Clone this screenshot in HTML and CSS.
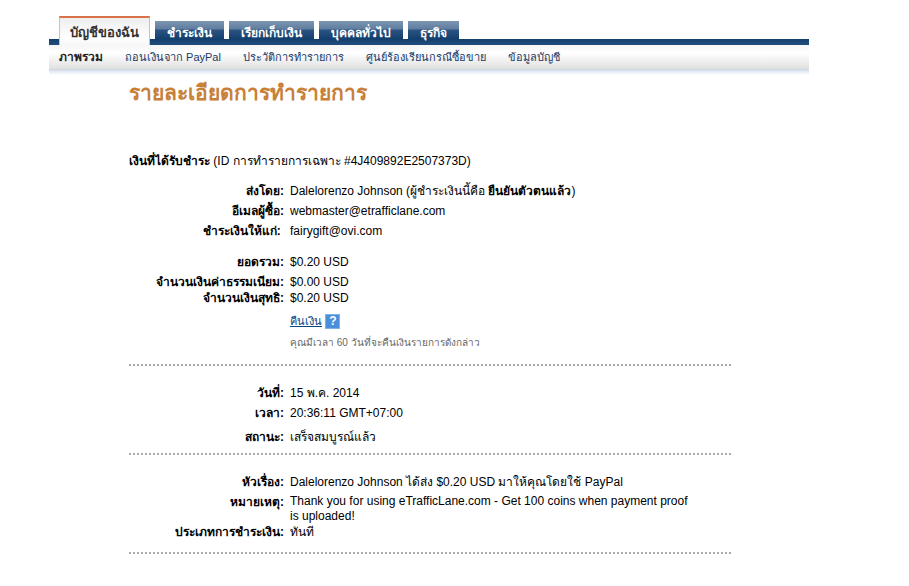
FILE: index.html
```html
<!DOCTYPE html>
<html lang="th">
<head>
  <meta charset="UTF-8" />
  <meta name="viewport" content="width=device-width, initial-scale=1.0"/>
  <title>รายละเอียดการทำรายการ - PayPal</title>
  <link rel="stylesheet" href="styles.css">
</head>
<body>

<div class="page">
  <nav class="tabs">
    <a class="tab active" href="#">บัญชีของฉัน</a>
    <a class="tab" href="#">ชำระเงิน</a>
    <a class="tab" href="#">เรียกเก็บเงิน</a>
    <a class="tab" href="#">บุคคลทั่วไป</a>
    <a class="tab" href="#">ธุรกิจ</a>
  </nav>
  <nav class="subnav">
    <a class="current" href="#">ภาพรวม</a>
    <a href="#">ถอนเงินจาก PayPal</a>
    <a href="#">ประวัติการทำรายการ</a>
    <a href="#">ศูนย์ร้องเรียนกรณีซื้อขาย</a>
    <a href="#">ข้อมูลบัญชี</a>
  </nav>

  <main class="content">
    <h1>รายละเอียดการทำรายการ</h1>
    <p class="summary"><strong>เงินที่ได้รับชำระ</strong> (ID การทำรายการเฉพาะ #4J409892E2507373D)</p>

    <section class="section">
      <dl class="details">
        <dt>ส่งโดย:</dt>
        <dd>Dalelorenzo Johnson (ผู้ชำระเงินนี้คือ <strong>ยืนยันตัวตนแล้ว</strong>)</dd>
        <dt>อีเมลผู้ซื้อ:</dt>
        <dd>webmaster@etrafficlane.com</dd>
        <dt>ชำระเงินให้แก่:&nbsp;</dt>
        <dd>fairygift@ovi.com</dd>
      </dl>
      <dl class="details">
        <dt>ยอดรวม:</dt>
        <dd>$0.20 USD</dd>
        <dt class="tight">จำนวนเงินค่าธรรมเนียม:</dt>
        <dd class="tight">$0.00 USD</dd>
        <dt>จำนวนเงินสุทธิ:</dt>
        <dd>$0.20 USD</dd>
      </dl>
      <div class="refund">
        <p><a class="refund-link" href="#">คืนเงิน</a> <button class="help" type="button" aria-label="ช่วยเหลือ">?</button></p>
        <p class="note">คุณมีเวลา 60 วันที่จะคืนเงินรายการดังกล่าว</p>
      </div>
    </section>

    <section class="section">
      <dl class="details">
        <dt>วันที่:</dt>
        <dd>15 พ.ค. 2014</dd>
        <dt class="loose">เวลา:</dt>
        <dd class="loose">20:36:11 GMT+07:00</dd>
        <dt class="tight">สถานะ:</dt>
        <dd class="tight">เสร็จสมบูรณ์แล้ว</dd>
      </dl>
    </section>

    <section class="section">
      <dl class="details">
        <dt>หัวเรื่อง:</dt>
        <dd>Dalelorenzo Johnson ได้ส่ง $0.20 USD มาให้คุณโดยใช้ PayPal</dd>
        <dt class="tight">หมายเหตุ:</dt>
        <dd class="tight message">Thank you for using eTrafficLane.com - Get 100 coins when payment proof is uploaded!</dd>
        <dt>ประเภทการชำระเงิน:</dt>
        <dd>ทันที</dd>
      </dl>
    </section>
  </main>
</div>

</body>
</html>
```
FILE: styles.css
```css
* { box-sizing: border-box; margin: 0; padding: 0; }
body {
  background: #fff;
  color: #000;
  font-family: "Liberation Sans", Arial, sans-serif;
  font-size: 12px;
  line-height: 16px;
}
a {
  color: #1a3a66;
  text-decoration: none;
}
.page {
  max-width: 809px;
  padding: 16px 0 16px 49px;
}

/* top tabs */
.tabs {
  display: flex;
  align-items: flex-end;
  gap: 5px;
  height: 29px;
  padding-left: 10px;
  background: linear-gradient(#133f6e, #234f80) bottom / 100% 6px no-repeat;
}
.tab {
  height: 24px;
  padding: 0 12px;
  color: #fff;
  font-weight: bold;
  line-height: 24px;
  white-space: nowrap;
  background: linear-gradient(#7e96b1, #5f7d9f 8px, #2c5482 9px, #133f6e 18px, #234f80);
}
.tab.active {
  height: 29px;
  padding: 0 10px;
  color: #333;
  font-size: 13px;
  line-height: 29px;
  background: linear-gradient(#eee, #fff 20px, #f6f6f6);
  border: 1px solid #c4c4c4;
  border-top: 2px solid #d9714a;
  border-bottom: none;
}
.subnav {
  display: flex;
  gap: 22px;
  height: 30px;
  padding-left: 10px;
  font-size: 11px;
  line-height: 24px;
  white-space: nowrap;
  background: linear-gradient(#f6f6f6, #fff 8px, #e0e0e0 24px, #c9d3e0 24px, #dfe7f1 26px, #fff 30px);
}
.subnav .current {
  color: #222;
  font-size: 12px;
  font-weight: bold;
}

/* transaction details */
.content {
  margin: 0 78px 0 80px;
}
h1 {
  margin: 4px 0 46px;
  color: #c88039;
  font-size: 21px;
  line-height: 28px;
}
.summary {
  margin-bottom: 14px;
}
.section {
  padding-bottom: 8px;
  margin-bottom: 19px;
  border-bottom: 2px dotted #aaa;
}
.details {
  display: grid;
  grid-template-columns: 155px 1fr;
  column-gap: 6px;
}
.details + .details {
  margin-top: 11px;
}
.details dt {
  font-weight: bold;
  text-align: right;
}
.details dt,
.details dd {
  padding-bottom: 4px;
}
.details .tight {
  padding-bottom: 0;
}
.details .loose {
  padding-bottom: 8px;
}
.details .message {
  padding-right: 32px;
  line-height: 15px;
}
.refund {
  padding-bottom: 5px;
  margin: 3px 0 0 161px;
}
.refund-link {
  color: #084482;
  font-size: 11px;
  text-decoration: underline;
}
.help {
  width: 15px;
  height: 15px;
  color: #fff;
  background: #4a8fdb;
  border: 1px solid #7fb2e8;
  font-family: inherit;
  font-size: 12px;
  font-weight: bold;
  line-height: 13px;
  cursor: pointer;
}
.note {
  margin-top: 6px;
  color: #666;
  font-size: 10px;
}
```
